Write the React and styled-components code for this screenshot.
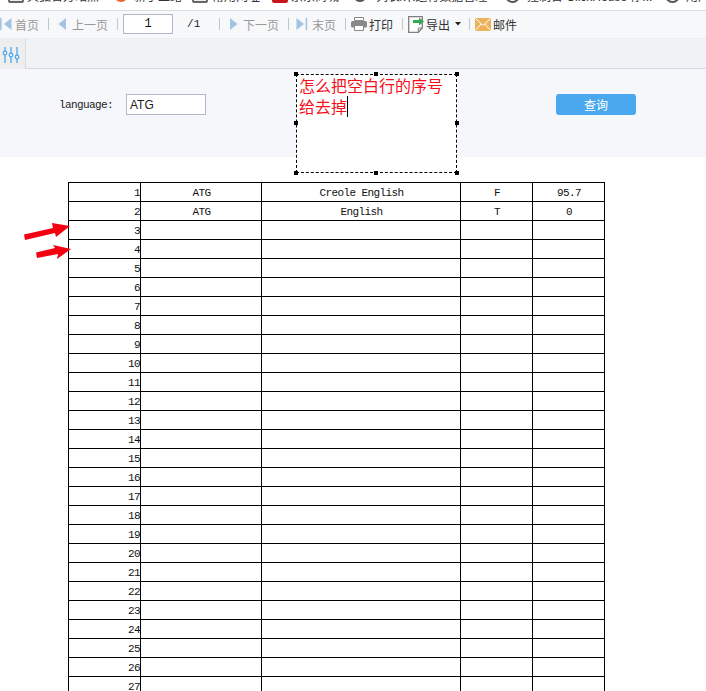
import React from "react";
import styled, { createGlobalStyle } from "styled-components";

const CJK = `"Liberation Sans", "Noto Sans CJK SC", sans-serif`;
const MONO = `"Liberation Mono", "Noto Sans CJK SC", monospace`;

const Global = createGlobalStyle`
  html, body { margin: 0; padding: 0; height: 691px; overflow: hidden; background: #fff; }
  * { box-sizing: border-box; }
`;
const Page = styled.div`position: relative; width: 706px; height: 691px; overflow: hidden; font-family: ${CJK};`;

const Bookmarks = styled.div`
  height: 11px; overflow: hidden; display: flex; align-items: flex-start;
  background: #fff; border-bottom: 1px solid #dcdde3; padding-left: 8px;
`;
const Mark = styled.div`
  display: flex; align-items: center; flex: none; gap: ${p => p.$gap}px; width: ${p => p.$w}px;
  height: 16px; margin-top: -13px; font-size: 12px; color: #333; white-space: nowrap; overflow: hidden;
`;
const MarkIcon = styled.span`
  flex: none; display: block; width: ${p => p.$s}px; height: ${p => p.$s}px;
  border: ${p => p.$line ? `2px solid ${p.$line}` : "none"};
  border-radius: ${p => p.$round ? "50%" : "2px"}; background: ${p => p.$bg};
`;

const Toolbar = styled.div`
  height: 28px; display: flex; align-items: center; background: #f7f8fa;
  border-bottom: 1px solid #eceef2; padding-bottom: 1px;
`;
const Tool = styled.div`
  display: flex; align-items: center; flex: none; gap: ${p => p.$gap}px;
  margin-left: ${p => p.$ml || 0}px; font-size: 12px; color: ${p => p.$off ? "#999" : "#333"};
`;
const Sep = styled.span`flex: none; width: 1px; height: 12px; background: #c4c5c9; margin-left: ${p => p.$ml}px;`;
const PageInput = styled.div`
  flex: none; margin-left: 5px; width: 50px; height: 20px; background: #fff; border: 1px solid #b4b6cc;
  font: 12px ${MONO}; color: #111; display: flex; align-items: center; justify-content: center;
`;
const Total = styled.span`flex: none; margin-left: 14px; width: 32px; font: 11px ${MONO}; color: #222;`;

const TabStrip = styled.div`
  height: 30px; display: flex; background: #f1f2f6; border-bottom: 1px solid #d8d9e0;
`;
const FirstTab = styled.div`
  width: 26px; height: 30px; background: #eeeeee; border-right: 1px solid #d8d9e0;
  display: flex; align-items: center; padding: 2px 0 0 2px;
`;

const Form = styled.div`
  height: 88px; background: #f6f7fa; display: flex; align-items: flex-start;
  padding: 25px 0 0 59px;
`;
const Label = styled.label`flex: none; width: 67px; height: 21px; font: 11px/22px ${MONO}; letter-spacing: -0.6px; color: #222;`;
const LangInput = styled.div`
  flex: none; width: 80px; height: 21px; padding-left: 3px; line-height: 21px; background: #fff;
  border: 1px solid #b4b6cc; font-size: 12px; color: #222;
`;
const Query = styled.button`
  flex: none; margin-left: 350px; width: 80px; height: 21px; border: 0; border-radius: 3px;
  background: #4aa8ee; color: #fff; font: 12px ${CJK}; padding: 0;
`;

const Sheet = styled.table`
  margin: 25px 0 0 68px; border-collapse: collapse; table-layout: fixed; width: 537px;
  font: 11px ${MONO}; letter-spacing: -0.6px; color: #111;
`;
const Cell = styled.td`
  border: 1px solid #000; height: 19px; padding: 1px 0 0 1px; text-align: center; white-space: nowrap; overflow: hidden;
`;
const NumCell = styled(Cell)`text-align: right; padding-right: 0;`;

const Note = styled.div`
  position: absolute; left: 296px; top: 74px; width: 161px; height: 99px; background: #fff;
  border: 1px dashed #000; padding: 0 2px; color: #f5101c;
  font: 16px/21px "Noto Sans CJK SC", sans-serif;
`;
const Caret = styled.span`display: inline-block; width: 1px; height: 21px; background: #000; vertical-align: top;`;
const Handle = styled.span`
  position: absolute; width: 4px; height: 4px; background: #000;
  left: ${p => p.$x}; top: ${p => p.$y};
`;
const Arrows = styled.svg`position: absolute; left: 20px; top: 218px;`;

const First = () => (
  <svg width="12" height="14" viewBox="0 0 12 14"><rect x="0" y="1" width="1.6" height="12" fill="#a3c2e4"/><path d="M11.5 1v12L4 7z" fill="#a3c2e4"/></svg>
);
const Prev = () => (
  <svg width="9" height="14" viewBox="0 0 9 14"><path d="M8 1v12L.5 7z" fill="#a3c2e4"/></svg>
);
const Next = () => (
  <svg width="9" height="14" viewBox="0 0 9 14"><path d="M1 1v12L8.5 7z" fill="#a3c2e4"/></svg>
);
const Last = () => (
  <svg width="12" height="14" viewBox="0 0 12 14"><path d="M.5 1v12L8 7z" fill="#a3c2e4"/><rect x="9.6" y="1" width="1.6" height="12" fill="#a3c2e4"/></svg>
);
const Print = () => (
  <svg width="16" height="14" viewBox="0 0 16 14">
    <path d="M3.5 .5h9v3h-9z" fill="#fff" stroke="#888"/>
    <rect x="0" y="4" width="16" height="6.5" rx="1.5" fill="#888"/>
    <path d="M3.5 8.5h9v5h-9z" fill="#fff" stroke="#888"/>
  </svg>
);
const Export = () => (
  <svg width="16" height="17" viewBox="0 0 16 17">
    <path d="M.7.7h13.6v11.3l-4 4.3H.7z" fill="#fff" stroke="#7f7f7f" strokeWidth="1.3"/>
    <path d="M10.3 16v-4h4" fill="none" stroke="#7f7f7f"/>
    <path d="M5 4h6V1.500L16 5.500l-5 4V7H5z" fill="#34a853"/>
  </svg>
);
const Caretdown = () => (
  <svg width="6" height="4" viewBox="0 0 6 4"><path d="M0 0h6L3 3.500z" fill="#222"/></svg>
);
const Mail = () => (
  <svg width="16" height="13" viewBox="0 0 16 13">
    <rect width="16" height="13" rx="1" fill="#edb25c"/>
    <path d="M.5.5 8 7.500 15.500.5M.5 12.500l5.500-6.500M15.500 12.500 10 6" fill="none" stroke="#fff" strokeWidth="1"/>
  </svg>
);
const Sliders = () => (
  <svg width="18" height="16" viewBox="0 0 18 16" fill="none" stroke="#4aa8ee">
    <path d="M3 0v4M3 8v8M9 0v6M9 10v6M15 0v8M15 12v4" strokeWidth="1.300"/>
    <circle cx="3" cy="6" r="1.800" strokeWidth="1.200"/>
    <circle cx="9" cy="8" r="1.800" strokeWidth="1.200"/>
    <circle cx="15" cy="10" r="1.800" strokeWidth="1.200"/>
  </svg>
);

const rows = Array.from({ length: 27 }, (_, i) => i + 1);
const data = {
  1: ["ATG", "Creole English", "F", "95.7"],
  2: ["ATG", "English", "T", "0"],
};
const handles = [
  ["-3px", "-3px"], ["77px", "-3px"], ["calc(100% - 1px)", "-3px"],
  ["-3px", "46px"], ["calc(100% - 1px)", "46px"],
  ["-3px", "96px"], ["77px", "96px"], ["calc(100% - 1px)", "96px"],
];

export default function App() {
  return (
    <Page>
      <Global />
      <Bookmarks>
        <Mark $w={106} $gap={3}><MarkIcon $s={16} $bg="#eee" $line="#666" />火狐官方站点</Mark>
        <Mark $w={78} $gap={6}><MarkIcon $s={14} $round $bg="#f0642a" />新手上路</Mark>
        <Mark $w={80} $gap={4}><MarkIcon $s={16} $bg="#eee" $line="#666" />常用网址</Mark>
        <Mark $w={81} $gap={3}><MarkIcon $s={16} $bg="#c8161d" />京东商城</Mark>
        <Mark $w={152} $gap={9}><MarkIcon $s={14} $round $bg="#fff" $line="#555" />列表/未运行数据管理</Mark>
        <Mark $w={160} $gap={7}><MarkIcon $s={15} $round $bg="#fff" $line="#555" />控制台 ClickHouse 停...</Mark>
        <Mark $w={41} $gap={6}><MarkIcon $s={15} $round $bg="#fff" $line="#555" />用户</Mark>
      </Bookmarks>
      <Toolbar>
        <Tool $off $gap={3}><First />首页</Tool>
        <Sep $ml={9} />
        <Tool $off $ml={9} $gap={5}><Prev />上一页</Tool>
        <Sep $ml={9} />
        <PageInput>1</PageInput>
        <Total>/1</Total>
        <Sep $ml={0} />
        <Tool $off $ml={9} $gap={5}><Next />下一页</Tool>
        <Sep $ml={9} />
        <Tool $off $ml={7} $gap={4}><Last />末页</Tool>
        <Sep $ml={9} />
        <Tool $ml={5} $gap={2}><Print />打印</Tool>
        <Sep $ml={9} />
        <Tool $ml={5} $gap={2}><Export />导出</Tool>
        <Tool $ml={5}><Caretdown /></Tool>
        <Sep $ml={8} />
        <Tool $ml={5} $gap={2}><Mail />邮件</Tool>
      </Toolbar>
      <TabStrip>
        <FirstTab><Sliders /></FirstTab>
      </TabStrip>
      <Form>
        <Label>language:</Label>
        <LangInput>ATG</LangInput>
        <Query>查询</Query>
      </Form>
      <Sheet>
        <colgroup>
          <col style={{ width: 72 }} /><col style={{ width: 121 }} /><col style={{ width: 199 }} /><col style={{ width: 72 }} /><col style={{ width: 72 }} />
        </colgroup>
        <tbody>
          {rows.map(n => (
            <tr key={n}>
              <NumCell>{n}</NumCell>
              {[0, 1, 2, 3].map(c => <Cell key={c}>{data[n]?.[c]}</Cell>)}
            </tr>
          ))}
        </tbody>
      </Sheet>
      <Note>
        怎么把空白行的序号给去掉<Caret />
        {handles.map(([x, y], i) => <Handle key={i} $x={x} $y={y} />)}
      </Note>
      <Arrows width="54" height="44" viewBox="0 0 54 44">
        <path d="M4 16.500 33 10 32 5 50 8 36 19 35 15 5 22z" fill="#f40010"/>
        <path d="M16 34.500 35 30 33 27 51 31 37 41 38 36 17 40z" fill="#f40010"/>
      </Arrows>
    </Page>
  );
}
